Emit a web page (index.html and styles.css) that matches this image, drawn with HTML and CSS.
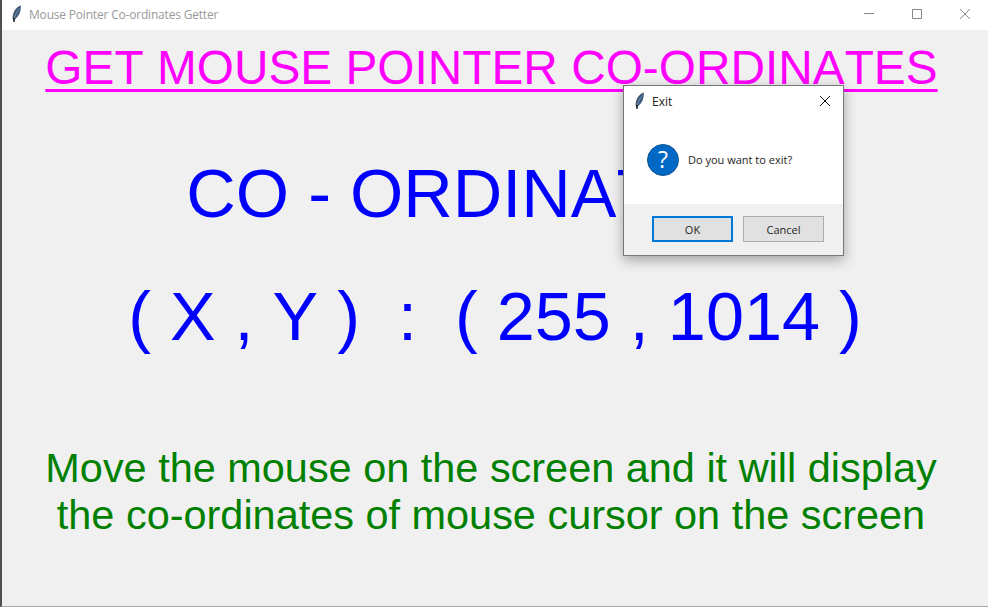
FILE: index.html
```
<!DOCTYPE html>
<html lang="en"><head><meta charset="utf-8"><title>Mouse Pointer Co-ordinates Getter</title><link rel="stylesheet" href="styles.css"></head>
<body>
<svg class="defs" aria-hidden="true"><symbol id="feather" viewBox="0 0 12 18"><path d="M9.8 1C6 1.8 2.2 6.5 2 13L3 17L4 14C7.8 12 10.2 6 9.8 1Z" fill="#3f5c80"/><path d="M9.8 1C6 1.8 2.2 6.5 2 13L3 17L4 13" fill="none" stroke="#39414d" stroke-width=".8"/><path d="M8.5 3.5C6 6 4 9.5 3 15" fill="none" stroke="#8ba1b9" stroke-width=".7"/><path d="M2.1 12.5L4.1 13.5L3 17Z" fill="#17191d"/></symbol></svg>
<main class="window">
<header class="titlebar"><svg class="feather"><use href="#feather"/></svg><span class="title">Mouse Pointer Co-ordinates Getter</span>
<div class="controls"><svg viewBox="0 0 12 12"><path d="M1 5.5H11"/></svg><svg viewBox="0 0 12 12"><path d="M1.5 1.5H10.5V10.5H1.5Z"/></svg><svg viewBox="0 0 12 12"><path d="M1 1L11 11M11 1L1 11"/></svg></div></header>
<section class="content">
<h1>GET MOUSE POINTER CO-ORDINATES</h1>
<h2>CO - ORDINATES</h2>
<p class="coords">( X , Y )&nbsp; :&nbsp; ( 255 , 1014 )</p>
<p class="help">Move the mouse on the screen and it will display<br>the co-ordinates of mouse cursor on the screen</p>
</section></main>
<div class="dialog" role="dialog">
<div class="dialog-title"><svg class="feather"><use href="#feather"/></svg><span>Exit</span><svg class="close" viewBox="0 0 12 12"><path d="M1 1L11 11M11 1L1 11"/></svg></div>
<div class="message"><span class="question">?</span><span class="prompt">Do you want to exit?</span></div>
<div class="actions"><button class="ok">OK</button><button>Cancel</button></div>
</div></body></html>
```
FILE: styles.css
```
*{box-sizing:border-box}
body{margin:0;width:988px;height:607px;overflow:hidden;font:12px "Open Sans","Noto Sans",sans-serif;color:#222}
.defs{position:absolute;width:0;height:0}
.window{height:607px;background:#f0f0f0;border-left:2px solid #505052;border-bottom:1px solid #aaa}
.titlebar{height:30px;background:#fff;display:flex;align-items:center;padding:0 17px 2px 9px;color:#999}
.feather{width:12px;height:18px;flex:none}
.title{margin-left:6px;font-size:12px;letter-spacing:-.19px}
.controls{margin-left:auto;display:flex;gap:36px}
.controls svg{width:12px;height:12px;fill:none;stroke:#888}
.content{font-family:"Liberation Sans",sans-serif;text-align:center;white-space:nowrap;font-kerning:none}
h1,h2,p{margin:0;font-weight:400}
h1{height:78px;padding:9px 7px 0 0;color:#f0f;font-size:47.8px;line-height:58px;text-decoration:underline;text-decoration-thickness:3px;text-underline-offset:5px;text-decoration-skip-ink:none}
h2{height:124px;padding:45px 54px 0 0;color:#00f;font-size:68.5px;line-height:82px}
.coords{height:212px;padding:43px 0 0;color:#00f;font-size:68.4px;line-height:82px}
.help{padding-right:8px;color:#008000;font-size:41.45px;line-height:47px}
.dialog{position:absolute;left:623px;top:85px;width:221px;height:171px;background:#fff;border:1px solid #777;box-shadow:0 4px 12px #0005}
.dialog-title{height:30px;display:flex;align-items:center;padding:0 12px 0 10px}
.dialog-title span{margin-left:6px}
.close{width:12px;height:12px;margin-left:auto;fill:none;stroke:#111}
.message{height:88px;display:flex;align-items:center;padding-left:23px;gap:9px;font-size:11px}
.prompt{padding-bottom:2px}
.question{width:32px;height:32px;border-radius:50%;background:#0068c5;border:1px solid #15548d;color:#fff;font-size:23px;line-height:29px;text-align:center}
.actions{height:51px;background:#f0f0f0;display:flex;gap:10px;padding:12px 0 0 28px}
button{width:81px;height:26px;background:#e1e1e1;border:1px solid #adadad;color:#222;font:11px "Open Sans",sans-serif;padding:0}
.ok{border:2px solid #0078d7}
```
